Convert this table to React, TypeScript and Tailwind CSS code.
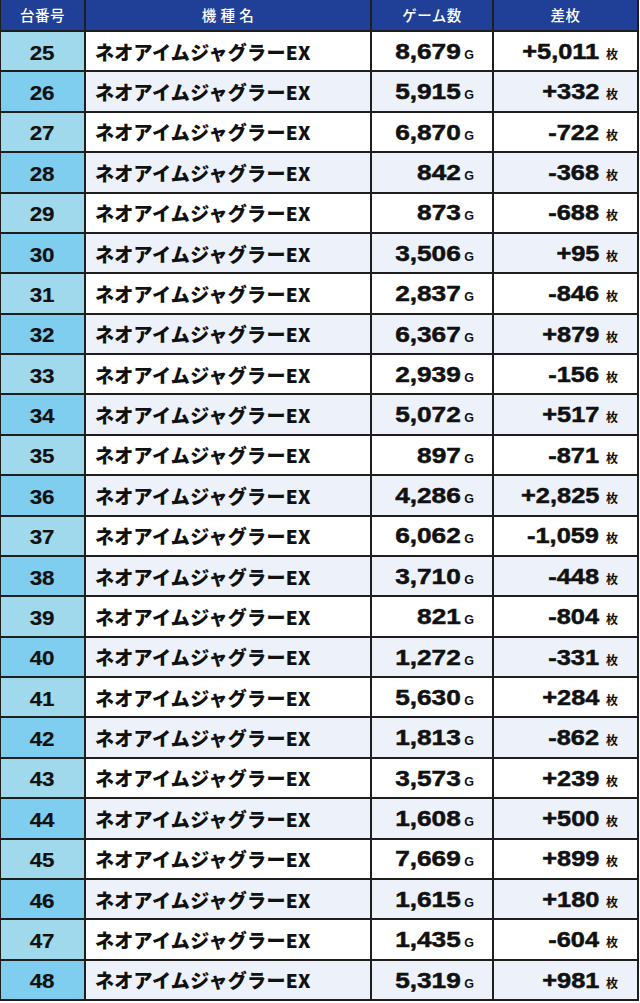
import React from "react";

const rows: [number, string, string][] = [
  [25, "8,679", "+5,011"],
  [26, "5,915", "+332"],
  [27, "6,870", "-722"],
  [28, "842", "-368"],
  [29, "873", "-688"],
  [30, "3,506", "+95"],
  [31, "2,837", "-846"],
  [32, "6,367", "+879"],
  [33, "2,939", "-156"],
  [34, "5,072", "+517"],
  [35, "897", "-871"],
  [36, "4,286", "+2,825"],
  [37, "6,062", "-1,059"],
  [38, "3,710", "-448"],
  [39, "821", "-804"],
  [40, "1,272", "-331"],
  [41, "5,630", "+284"],
  [42, "1,813", "-862"],
  [43, "3,573", "+239"],
  [44, "1,608", "+500"],
  [45, "7,669", "+899"],
  [46, "1,615", "+180"],
  [47, "1,435", "-604"],
  [48, "5,319", "+981"],
];

const JP = "[font-family:'Noto_Sans_CJK_JP',sans-serif]";
const NUM = "[font-family:'Liberation_Sans',Arial,sans-serif]";

export default function App() {
  return (
    <div className="w-[640px] h-[1003px] bg-white">
      <div className="w-[639px] bg-[#1e1e1e] pl-px pr-[2px] pb-[2px]">
        <div className="grid grid-cols-[83px_284px_120px_143px] grid-rows-[30px_repeat(24,38.375px)] gap-[2px]">
          {["台番号", "機 種 名", "ゲーム数", "差枚"].map((h) => (
            <div
              key={h}
              className={`${JP} bg-[#1f4096] text-white text-[14.5px] font-medium flex items-center justify-center whitespace-pre leading-none tracking-[0.5px]`}
            >
              {h}
            </div>
          ))}
          {rows.map(([n, g, d], i) => {
            const even = i % 2 === 1;
            const cell = even ? "bg-[#edf1f9]" : "bg-white";
            return (
              <React.Fragment key={n}>
                <div
                  className={`${even ? "bg-[#7fcdef]" : "bg-[#a1d9ec]"} ${NUM} flex items-center justify-center pt-[3px] text-[20px] font-bold text-[#111] leading-none`}
                >
                  <span className="inline-block scale-x-[1.12] [-webkit-text-stroke:0.2px_#111]">{n}</span>
                </div>
                <div
                  className={`${cell} ${JP} flex items-center pl-[9px] text-[19px] font-black text-[#111] leading-none whitespace-nowrap tracking-[0.3px]`}
                >
                  ネオアイムジャグラーEX
                </div>
                <div className={`${cell} flex items-center justify-end pr-[18px] pt-[3px] text-[#111]`}>
                  <div className="flex items-baseline leading-none">
                    <span
                      className={`${NUM} inline-block origin-right scale-x-[1.22] text-[21.5px] font-bold [-webkit-text-stroke:0.5px_#111]`}
                    >
                      {g}
                    </span>
                    <span className={`${NUM} text-[12.5px] font-bold ml-[3px]`}>G</span>
                  </div>
                </div>
                <div className={`${cell} flex items-center justify-end pr-[19px] pt-[3px] text-[#111]`}>
                  <div className="flex items-baseline leading-none">
                    <span
                      className={`${NUM} inline-block origin-right scale-x-[1.18] text-[21.5px] font-bold [-webkit-text-stroke:0.5px_#111]`}
                    >
                      {d}
                    </span>
                    <span className={`${JP} text-[12px] font-bold ml-[7px]`}>枚</span>
                  </div>
                </div>
              </React.Fragment>
            );
          })}
        </div>
      </div>
    </div>
  );
}
